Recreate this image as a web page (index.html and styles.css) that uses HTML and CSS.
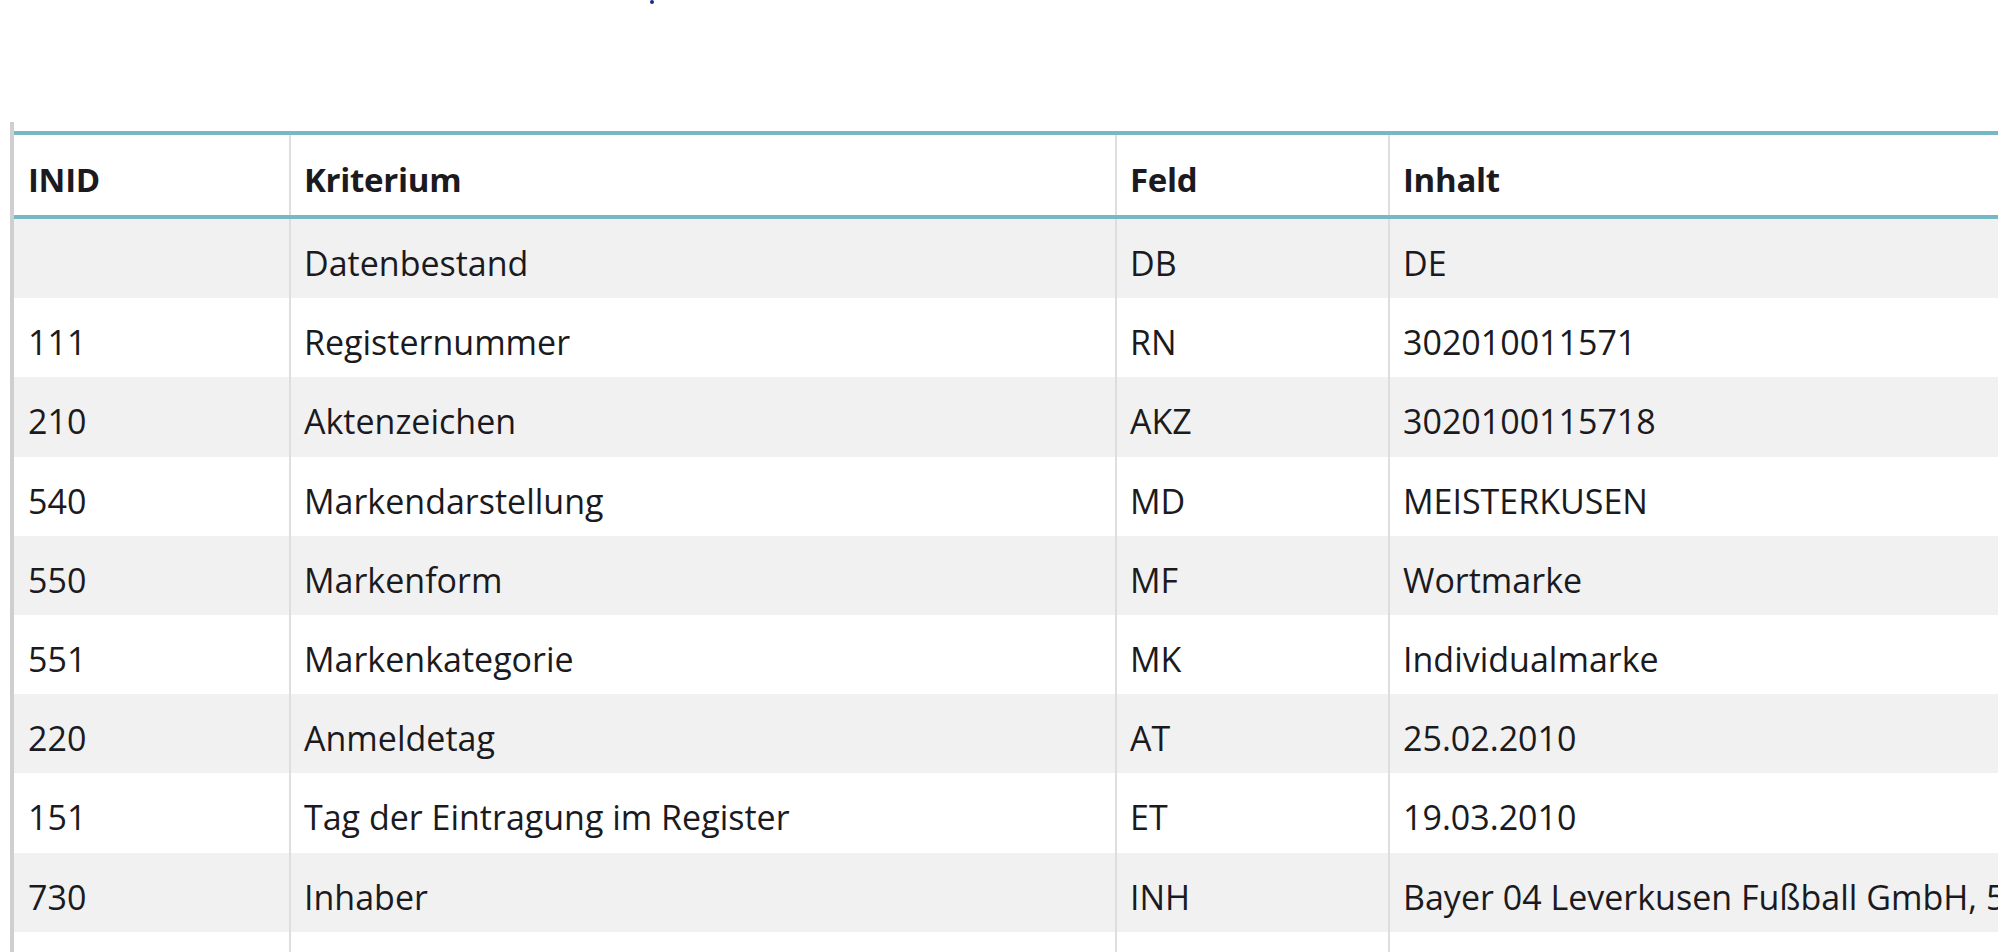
FILE: index.html
```html
<!DOCTYPE html>
<html lang="de">
<head>
<meta charset="utf-8">
<title>Registerauskunft</title>
<link rel="stylesheet" href="styles.css">
</head>
<body>
<div class="top">
  <span class="dot"></span>
</div>
<div class="frame">
  <table class="data">
    <colgroup>
      <col class="c-inid">
      <col class="c-krit">
      <col class="c-feld">
      <col class="c-inh">
    </colgroup>
    <thead>
      <tr><th>INID</th><th>Kriterium</th><th>Feld</th><th>Inhalt</th></tr>
    </thead>
    <tbody>
      <tr><td></td><td>Datenbestand</td><td>DB</td><td>DE</td></tr>
      <tr><td>111</td><td>Registernummer</td><td>RN</td><td>302010011571</td></tr>
      <tr><td>210</td><td>Aktenzeichen</td><td>AKZ</td><td>3020100115718</td></tr>
      <tr><td>540</td><td>Markendarstellung</td><td>MD</td><td>MEISTERKUSEN</td></tr>
      <tr><td>550</td><td>Markenform</td><td>MF</td><td>Wortmarke</td></tr>
      <tr><td>551</td><td>Markenkategorie</td><td>MK</td><td>Individualmarke</td></tr>
      <tr><td>220</td><td>Anmeldetag</td><td>AT</td><td>25.02.2010</td></tr>
      <tr><td>151</td><td>Tag der Eintragung im Register</td><td>ET</td><td>19.03.2010</td></tr>
      <tr><td>730</td><td>Inhaber</td><td>INH</td><td>Bayer 04 Leverkusen Fußball GmbH, 51373 Leverkusen, DE</td></tr>
      <tr class="empty"><td></td><td></td><td></td><td></td></tr>
    </tbody>
  </table>
</div>
</body>
</html>
```
FILE: styles.css
```css
html, body {
  margin: 0;
  padding: 0;
  background: #ffffff;
  overflow: hidden;
  width: 1998px;
  height: 952px;
}
body {
  font-family: "Open Sans", "Noto Sans", "Liberation Sans", sans-serif;
  color: #1a1a20;
}
.top {
  height: 122px;
  padding-left: 650px;
  box-sizing: border-box;
}
.dot {
  display: block;
  width: 4px;
  height: 4px;
  border-radius: 2px;
  background: #1a2a8a;
}
.frame {
  margin-left: 10px;
  border-left: 4px solid #cfcfcf;
  padding-top: 9px;
  width: 2600px;
  height: 900px;
}
.data {
  border-collapse: collapse;
  table-layout: fixed;
  width: 2400px;
  border-top: 4px solid #76b9c5;
  font-size: 34px;
}
.c-inid { width: 276px; }
.c-krit { width: 826px; }
.c-feld { width: 273px; }
.c-inh { width: 1025px; }
.data th,
.data td {
  text-align: left;
  padding: 9px 13px 0 13px;
  border-left: 2px solid #dedede;
  white-space: nowrap;
  overflow: hidden;
  vertical-align: middle;
}
.data th:first-child,
.data td:first-child {
  border-left: none;
  padding-left: 14px;
}
.data th {
  height: 71px;
  padding-top: 9px;
  padding-bottom: 0;
  font-size: 33px;
  font-weight: 700;
  letter-spacing: -0.3px;
  border-bottom: 4px solid #76b9c5;
  background: #ffffff;
}
.data td {
  height: 70.2px;
  font-weight: 400;
}
.data tbody tr:nth-child(odd) td {
  background: #f1f1f1;
}
.data tbody tr:nth-child(even) td {
  background: #ffffff;
}
```
